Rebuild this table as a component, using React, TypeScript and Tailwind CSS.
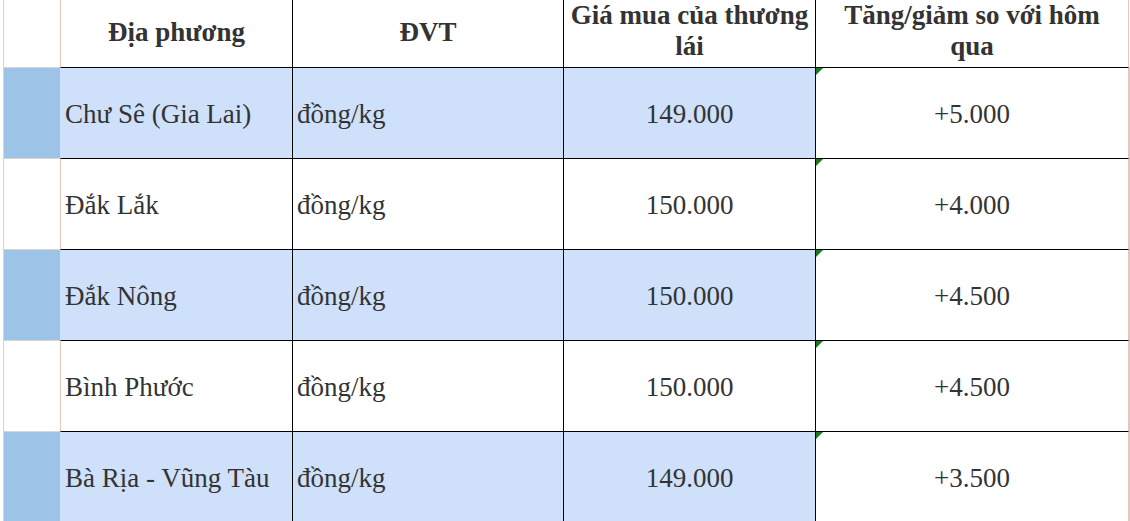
import React from "react";

type Row = { name: string; price: string; change: string; blue: boolean };

const rows: Row[] = [
  { name: "Chư Sê (Gia Lai)", price: "149.000", change: "+5.000", blue: true },
  { name: "Đắk Lắk", price: "150.000", change: "+4.000", blue: false },
  { name: "Đắk Nông", price: "150.000", change: "+4.500", blue: true },
  { name: "Bình Phước", price: "150.000", change: "+4.500", blue: false },
  { name: "Bà Rịa - Vũng Tàu", price: "149.000", change: "+3.500", blue: true },
];

function Tri() {
  return (
    <svg className="absolute left-0 top-0" width="7" height="7" viewBox="0 0 7 7">
      <polygon points="0,0 7,0 0,7" fill="#1b7a1b" />
    </svg>
  );
}

export default function App() {
  return (
    <div className="w-[1130px] h-[521px] overflow-hidden bg-white font-['Liberation_Serif','Times_New_Roman',serif] text-[#333333] text-[27px]">
      {/* header */}
      <div className="flex h-[68px]">
        <div className="w-[3px] shrink-0" />
        <div className="w-[57px] shrink-0 border-l border-b border-[#d6d6d6] bg-white" />
        <div className="w-[232px] shrink-0 border-l border-l-[#e9c6bf] border-b border-b-black flex items-center justify-center font-bold leading-[32px] text-center pb-[4px]">
          Địa phương
        </div>
        <div className="w-[271px] shrink-0 border-l border-b border-black flex items-center justify-center font-bold leading-[32px] text-center pb-[4px]">
          ĐVT
        </div>
        <div className="w-[252px] shrink-0 border-l border-b border-black flex items-center justify-center font-bold leading-[31px] text-center pb-[6px]">
          <span>
            Giá mua của thương
            <br />
            lái
          </span>
        </div>
        <div className="w-[314px] shrink-0 border-l border-l-black border-b border-b-black border-r border-r-[#e9c6bf] flex items-center justify-center font-bold leading-[31px] text-center pb-[6px]">
          <span>
            Tăng/giảm so với hôm
            <br />
            qua
          </span>
        </div>
        <div className="w-[1px] shrink-0 bg-white" />
      </div>
      {rows.map((r, i) => (
        <div key={i} className="flex h-[91px]">
          <div className="w-[3px] shrink-0" />
          <div
            className={
              "w-[57px] shrink-0 border-l border-b border-[#d6d6d6] " +
              (r.blue ? "bg-[#9dc3e6]" : "bg-white")
            }
          />
          <div
            className={
              "w-[232px] shrink-0 border-l border-b border-b-black flex items-center pl-[4px] pt-[2px] leading-none " +
              (r.blue ? "bg-[#cfe0fb] border-l-[#cfe0fb]" : "bg-white border-l-[#e9c6bf]")
            }
          >
            {r.name}
          </div>
          <div
            className={
              "w-[271px] shrink-0 border-l border-b border-black flex items-center pl-[4px] pt-[2px] leading-none " +
              (r.blue ? "bg-[#cfe0fb]" : "bg-white")
            }
          >
            đồng/kg
          </div>
          <div
            className={
              "w-[252px] shrink-0 border-l border-b border-black flex items-center justify-center pt-[2px] leading-none " +
              (r.blue ? "bg-[#cfe0fb]" : "bg-white")
            }
          >
            {r.price}
          </div>
          <div className="relative w-[314px] shrink-0 border-l border-l-black border-b border-b-black border-r border-r-[#e9c6bf] flex items-center justify-center pt-[2px] leading-none bg-white">
            <Tri />
            {r.change}
          </div>
          <div className="w-[1px] shrink-0 bg-[#c6cbd6]" />
        </div>
      ))}
    </div>
  );
}
